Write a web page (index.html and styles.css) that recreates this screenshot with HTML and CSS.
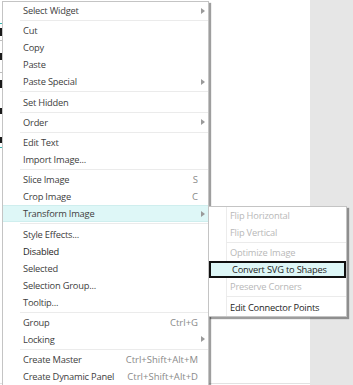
FILE: index.html
```html
<!DOCTYPE html>
<html>
<head>
<meta charset="utf-8">
<link rel="stylesheet" href="styles.css">
</head>
<body>
<div class="stage">
  <div class="canvas">
    <div class="mark m-teal" style="top:23px"></div>
    <div class="mark m-black" style="top:28px;height:8px"></div>
    <div class="mark m-gray" style="top:40px"></div>
    <div class="mark m-black" style="top:53px;height:7px"></div>
    <div class="mark m-gray" style="top:72px"></div>
    <div class="mark m-black" style="top:80px;height:8px"></div>
    <div class="mark m-black" style="top:108px;height:6px"></div>
    <div class="mark m-black" style="top:137px;height:6px"></div>
    <div class="mark m-teal" style="top:147px"></div>
  </div>
  <div class="panel"></div>

  <div class="menu main">
    <div class="item"><span class="label">Select Widget</span><span class="key"></span><span class="arr"><i class="tri"></i></span></div>
    <div class="sep"></div>
    <div class="item"><span class="label">Cut</span><span class="key"></span><span class="arr"></span></div>
    <div class="item"><span class="label">Copy</span><span class="key"></span><span class="arr"></span></div>
    <div class="item"><span class="label">Paste</span><span class="key"></span><span class="arr"></span></div>
    <div class="item"><span class="label">Paste Special</span><span class="key"></span><span class="arr"><i class="tri"></i></span></div>
    <div class="sep"></div>
    <div class="item"><span class="label">Set Hidden</span><span class="key"></span><span class="arr"></span></div>
    <div class="sep"></div>
    <div class="item"><span class="label">Order</span><span class="key"></span><span class="arr"><i class="tri"></i></span></div>
    <div class="sep"></div>
    <div class="item"><span class="label">Edit Text</span><span class="key"></span><span class="arr"></span></div>
    <div class="item"><span class="label">Import Image...</span><span class="key"></span><span class="arr"></span></div>
    <div class="sep"></div>
    <div class="item"><span class="label">Slice Image</span><span class="key">S</span><span class="arr"></span></div>
    <div class="item"><span class="label">Crop Image</span><span class="key">C</span><span class="arr"></span></div>
    <div class="item hot"><span class="label">Transform Image</span><span class="key"></span><span class="arr"><i class="tri"></i></span></div>
    <div class="sep"></div>
    <div class="item"><span class="label">Style Effects...</span><span class="key"></span><span class="arr"></span></div>
    <div class="item dark"><span class="label">Disabled</span><span class="key"></span><span class="arr"></span></div>
    <div class="item"><span class="label">Selected</span><span class="key"></span><span class="arr"></span></div>
    <div class="item"><span class="label">Selection Group...</span><span class="key"></span><span class="arr"></span></div>
    <div class="item"><span class="label">Tooltip...</span><span class="key"></span><span class="arr"></span></div>
    <div class="sep"></div>
    <div class="item"><span class="label">Group</span><span class="key">Ctrl+G</span><span class="arr"></span></div>
    <div class="item"><span class="label">Locking</span><span class="key"></span><span class="arr"><i class="tri"></i></span></div>
    <div class="sep"></div>
    <div class="item"><span class="label">Create Master</span><span class="key">Ctrl+Shift+Alt+M</span><span class="arr"></span></div>
    <div class="item"><span class="label">Create Dynamic Panel</span><span class="key">Ctrl+Shift+Alt+D</span><span class="arr"></span></div>
  </div>

  <div class="menu sub">
    <div class="item off"><span class="label">Flip Horizontal</span></div>
    <div class="item off"><span class="label">Flip Vertical</span></div>
    <div class="sep"></div>
    <div class="item off"><span class="label">Optimize Image</span></div>
    <div class="item focus"><span class="label">Convert SVG to Shapes</span></div>
    <div class="item off"><span class="label">Preserve Corners</span></div>
    <div class="sep"></div>
    <div class="item dark"><span class="label">Edit Connector Points</span></div>
  </div>
</div>
</body>
</html>
```
FILE: styles.css
```css
html, body {
  margin: 0;
  padding: 0;
  background: #ffffff;
}
body {
  width: 353px;
  height: 385px;
  overflow: hidden;
  font-family: "Open Sans", "Noto Sans", sans-serif;
  font-size: 9.3px;
  color: #404040;
}
.stage {
  position: relative;
  display: flex;
  width: 353px;
  height: 385px;
}
.canvas {
  position: relative;
  flex: 0 0 310px;
  height: 383px;
  border-bottom: 1px solid #e2e2e2;
  background: #ffffff;
}
.panel {
  flex: 1;
  background: #e6e6e6;
}
.mark {
  position: absolute;
  left: 0;
  width: 2px;
  height: 1px;
}
.m-black { background: #1a1a1a; }
.m-gray { background: #bdbdbd; }
.m-teal { background: #3bb7b0; }

.menu {
  position: absolute;
  background: #ffffff;
  border: 1px solid #c4c4c4;
  box-shadow: 2px 2px 1px rgba(0, 0, 0, 0.38);
}
.main {
  left: 2px;
  top: 1px;
  width: 205px;
  height: 400px;
}
.sub {
  left: 208px;
  top: 206px;
  width: 137px;
  background: linear-gradient(to right, transparent 17px, #ececec 17px, #ececec 18px, transparent 18px), #ffffff;
}
.item {
  display: flex;
  align-items: center;
  height: 17px;
  box-sizing: border-box;
  padding-left: 20px;
  white-space: nowrap;
}
.sub .item {
  padding-left: 21px;
}
.label {
  flex: 1;
  letter-spacing: -0.2px;
}
.key {
  color: #8a8a8a;
  font-size: 9.5px;
}
.arr {
  width: 10px;
  height: 17px;
  display: flex;
  align-items: center;
  justify-content: center;
}
.tri {
  display: block;
  width: 0;
  height: 0;
  border-left: 4px solid #9a9a9a;
  border-top: 3px solid transparent;
  border-bottom: 3px solid transparent;
}
.sep {
  height: 1px;
  background: #ebebeb;
  margin: 1px 0 1.25px 17px;
}
.sub .sep {
  margin-left: 17px;
}
.hot {
  background: #def7f7;
  border-top: 1px solid #cfeeee;
  border-bottom: 1px solid #cfeeee;
}
.dark {
  color: #1e1e1e;
}
.off {
  color: #b8b8b8;
}
.focus {
  background: #def7f7;
  border: 2px solid #111111;
  padding-left: 19px;
  color: #1e1e1e;
}
```
